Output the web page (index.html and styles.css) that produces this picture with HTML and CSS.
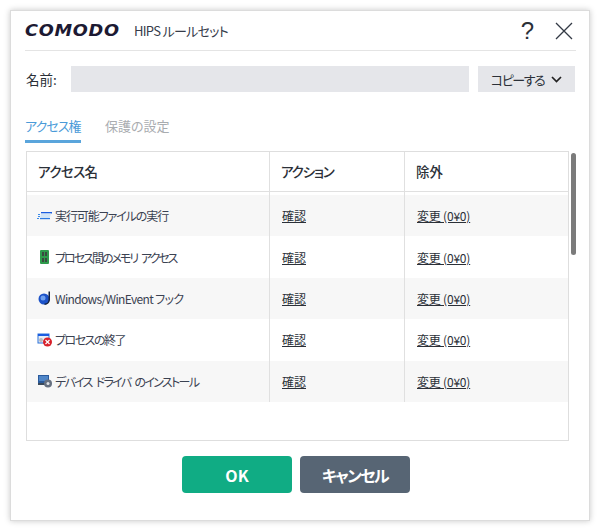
FILE: index.html
```html
<!DOCTYPE html>
<html lang="ja">
<head>
<meta charset="utf-8">
<title>COMODO HIPS ルールセット</title>
<link rel="stylesheet" href="styles.css">
</head>
<body>
<div class="window">
  <header class="titlebar">
    <span class="logo-box"><span class="logo">COMODO</span></span>
    <span class="title">HIPS ルールセット</span>
    <span class="help">?</span>
    <svg class="close" width="18" height="18" viewBox="0 0 18 18"><path d="M1 1 L17 17 M17 1 L1 17" stroke="#333a45" stroke-width="1.3" fill="none"/></svg>
  </header>
  <div class="name-row">
    <label class="name-label">名前:</label>
    <div class="name-input"></div>
    <div class="copy-btn"><span class="copy-text">コピーする</span>
      <svg width="11" height="7" viewBox="0 0 11 7"><path d="M1 1 L5.5 5.5 L10 1" stroke="#222" stroke-width="1.7" fill="none"/></svg>
    </div>
  </div>
  <nav class="tabs">
    <span class="tab active">アクセス権</span>
    <span class="tab">保護の設定</span>
  </nav>
  <div class="table-wrap">
    <div class="table">
      <div class="row head">
        <div class="cell narrow">アクセス名</div>
        <div class="cell narrower">アクション</div>
        <div class="cell">除外</div>
      </div>
      <div class="head-gap"><i></i><i></i></div>
      <div class="row odd">
        <div class="cell name t1">
          <svg class="icon" width="16" height="16" viewBox="0 0 16 16"><path d="M4 4h11v1.500h-11z" fill="#1a5ce0"/><path d="M4 5.500h10l-1.500 5h-9.500z" fill="#cfe3f7"/><path d="M3 10h10v1.200h-10z" fill="#2a78e0"/><path d="M1 6h2v1h-2zM1 8h2v1h-2zM0 10h2v1h-2z" fill="#3d8be8"/></svg>
          実行可能ファイルの実行</div>
        <div class="cell"><a>確認</a></div>
        <div class="cell"><a class="change">変更 (0¥0)</a></div>
      </div>
      <div class="row">
        <div class="cell name t2">
          <svg class="icon" width="16" height="16" viewBox="0 0 16 16"><rect x="3" y="1" width="9" height="14" rx="1" fill="#2f9a4c"/><rect x="5" y="3" width="2" height="4" fill="#3a4a40"/><rect x="8" y="3" width="2" height="4" fill="#3a4a40"/><rect x="5" y="9" width="2" height="4" fill="#3a4a40"/><rect x="8" y="9" width="2" height="4" fill="#3a4a40"/></svg>
          プロセス間のメモリ アクセス</div>
        <div class="cell"><a>確認</a></div>
        <div class="cell"><a class="change">変更 (0¥0)</a></div>
      </div>
      <div class="row odd">
        <div class="cell name t3">
          <svg class="icon" width="16" height="16" viewBox="0 0 16 16"><circle cx="7" cy="9" r="5.500" fill="#1c52c8"/><circle cx="6" cy="8" r="2.500" fill="#6fa0ee"/><path d="M7.500 13.500 A4 4 0 0 0 11.500 10 V1.500 H13 V10 A6 6 0 0 1 7.500 15z" fill="#15233f"/></svg>
          Windows/WinEvent フック</div>
        <div class="cell"><a>確認</a></div>
        <div class="cell"><a class="change">変更 (0¥0)</a></div>
      </div>
      <div class="row">
        <div class="cell name t4">
          <svg class="icon" width="16" height="16" viewBox="0 0 16 16"><rect x="1" y="2" width="11" height="9" fill="#e8eef6" stroke="#2a70d8"/><rect x="1" y="2" width="11" height="2" fill="#1a5ce0"/><circle cx="4" cy="8" r="2" fill="#b4b8be"/><circle cx="10.500" cy="10" r="4.500" fill="#d8202a"/><path d="M8.500 8 L12.500 12 M12.500 8 L8.500 12" stroke="#fff" stroke-width="1.200"/></svg>
          プロセスの終了</div>
        <div class="cell"><a>確認</a></div>
        <div class="cell"><a class="change">変更 (0¥0)</a></div>
      </div>
      <div class="row odd">
        <div class="cell name t5">
          <svg class="icon" width="16" height="16" viewBox="0 0 16 16"><rect x="1" y="2" width="11" height="8" fill="#2a5a9c"/><rect x="2" y="3" width="9" height="5" fill="#4f86c8"/><rect x="1" y="10" width="8" height="2" fill="#3a4a5c"/><circle cx="11" cy="10.500" r="4" fill="#667080"/><circle cx="11" cy="10.500" r="1.500" fill="#dfe3e8"/></svg>
          デバイス ドライバ のインストール</div>
        <div class="cell"><a>確認</a></div>
        <div class="cell"><a class="change">変更 (0¥0)</a></div>
      </div>
    </div>
    <div class="scrollbar"></div>
  </div>
  <footer class="actions">
    <button class="btn ok">OK</button>
    <button class="btn cancel">キャンセル</button>
  </footer>
</div>
</body>
</html>
```
FILE: styles.css
```css
* { box-sizing: border-box; }
html, body { margin: 0; height: 100%; background: #fff; }
body {
  padding: 10px;
  font-family: "Noto Sans CJK JP", "Noto Sans", sans-serif;
  font-feature-settings: "palt";
  color: #2b3038;
  font-size: 12px;
  overflow: hidden;
}
.window {
  width: 580px;
  height: 511px;
  background: #fff;
  border: 1px solid #dcdcdc;
  box-shadow: 0 0 6px rgba(0,0,0,.22);
  padding: 0 14px;
}
.titlebar {
  display: flex;
  align-items: center;
  height: 40px;
  width: 551px;
  border-bottom: 1px solid #e4e4e4;
}
.logo-box { width: 109px; }
.logo {
  display: inline-block;
  font-family: "DejaVu Sans", sans-serif;
  font-weight: 700;
  font-style: italic;
  font-size: 15px;
  letter-spacing: .6px;
  color: #1d1a33;
  transform: scaleX(1.18);
  transform-origin: left center;
}
.title { flex: 1; font-size: 13px; letter-spacing: -.7px; color: #363c4a; }
.help { font-family: "Liberation Sans", sans-serif; font-size: 24px; color: #2b3038; margin-right: 21px; }
.close { margin-right: 3px; }
.name-row {
  display: flex;
  align-items: center;
  height: 26px;
  margin-top: 15px;
}
.name-label { width: 46px; padding-left: 1px; font-size: 13.500px; color: #2b3038; }
.name-input { width: 399px; height: 26px; background: #e5e6ea; }
.copy-btn {
  width: 97px;
  height: 26px;
  margin-left: 9px;
  background: #e5e6ea;
  display: flex;
  align-items: center;
  justify-content: center;
  gap: 7px;
  font-size: 13px;
}
.copy-text { letter-spacing: -1.4px; }
.tabs {
  display: flex;
  gap: 24px;
  margin-top: 24px;
  height: 27px;
}
.tab { font-size: 13px; color: #a9acb0; height: 27px; width: 56px; white-space: nowrap; }
.tab.active { color: #4a9ad8; border-bottom: 3px solid #5aa5dc; letter-spacing: -.9px; }
.table-wrap {
  position: relative;
  width: 543px;
  height: 290px;
  margin-top: 8px;
  margin-left: 1px;
  border: 1px solid #dedede;
}
.table { width: 100%; }
.row {
  display: grid;
  grid-template-columns: 243px 135px 1fr;
  height: 41.400px;
}
.row.odd { background: #f7f7f7; }
.row.head { height: 40px; background: #fff; border-bottom: 1px solid #e0e0e0; font-weight: 500; }
.head-gap { height: 3px; display: grid; grid-template-columns: 243px 135px 1fr; }
.head-gap i { border-right: 1px solid #e0e0e0; }
.cell {
  display: flex;
  align-items: center;
  padding-left: 12px;
  border-right: 1px solid #e0e0e0;
  white-space: nowrap;
  font-size: 12px;
}
.head .cell { font-size: 13.500px; padding-left: 11px; padding-bottom: 1px; }
.head .narrow { letter-spacing: -.6px; }
.head .narrower { letter-spacing: -1.2px; }
.cell:last-child { border-right: 0; }
.cell.name { padding-left: 10px; gap: 2px; color: #3b4252; }
.t1 { letter-spacing: -1.1px; }
.t2 { letter-spacing: -2px; word-spacing: 3px; }
.t3 { letter-spacing: -.65px; }
.t4 { letter-spacing: -1.5px; }
.t5 { letter-spacing: -1.7px; word-spacing: 3px; }
.icon { flex: none; }
a { color: #2b3038; text-decoration: underline; }
.change { letter-spacing: -.2px; }
.scrollbar {
  position: absolute;
  top: 1px;
  right: -8px;
  width: 5px;
  height: 102px;
  border-radius: 3px;
  background: #7b7b7b;
}
.actions {
  display: flex;
  justify-content: center;
  gap: 8px;
  margin-top: 15px;
  padding-right: 8px;
}
.btn {
  width: 110px;
  height: 37px;
  border: 0;
  border-radius: 4px;
  color: #fff;
  font-family: inherit;
  font-feature-settings: inherit;
  font-weight: 700;
  font-size: 16px;
}
.btn.ok { background: #10ac84; }
.btn.cancel { background: #576574; letter-spacing: -1.5px; }
```
